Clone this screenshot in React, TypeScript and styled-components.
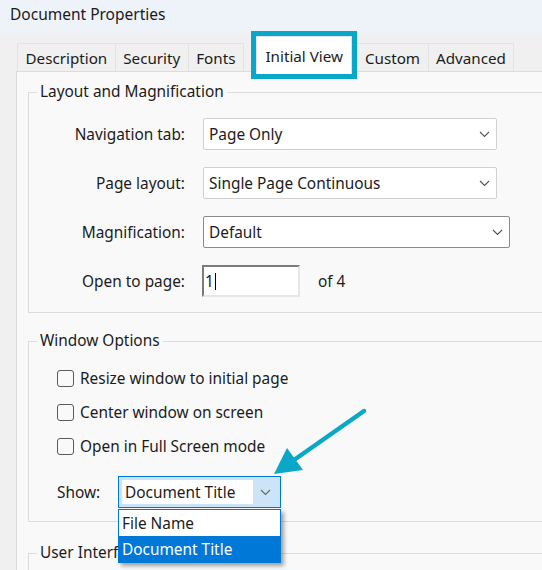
import React from "react";
import styled, { createGlobalStyle } from "styled-components";

const Global = createGlobalStyle`
  html, body { margin: 0; padding: 0; background: #f0f0f0; overflow: hidden; }
  body {
    font-family: "Noto Sans", "Open Sans", sans-serif;
    font-size: 15.4px;
    color: #1b1b1b;
  }
  * { box-sizing: border-box; }
`;

const Window = styled.div`
  position: relative;
  width: 542px;
  height: 570px;
  overflow: hidden;
  background: #f0f0f0;
`;

const TitleBar = styled.div`
  height: 33px;
  background: #eef3fa;
  display: flex;
  align-items: center;
  padding: 0 0 5px 10px;
  font-size: 15.5px;
  color: #1a1a1a;
`;

const Body = styled.div`
  padding: 3px 0 0 16px;
`;

const TabRow = styled.div`
  display: flex;
  align-items: flex-end;
  height: 35px;
  padding-left: 1px;
`;

const Tab = styled.div<{ $active?: boolean }>`
  display: flex;
  align-items: center;
  justify-content: center;
  padding: 0 ${(p) => (p.$active ? "8.5px" : "7.5px")};
  height: ${(p) => (p.$active ? "38px" : "28px")};
  background: ${(p) => (p.$active ? "#ffffff" : "#f0f0f0")};
  border: 1px solid #e3e3e3;
  border-bottom: none;
  margin-right: ${(p) => (p.$active ? "4px" : "-1px")};
  margin-left: ${(p) => (p.$active ? "13px" : "0")};
  margin-bottom: ${(p) => (p.$active ? "-3px" : "0")};
  position: relative;
  z-index: ${(p) => (p.$active ? 2 : 0)};
  outline: ${(p) => (p.$active ? "5px solid #0aa7c9" : "none")};
  white-space: nowrap;
  font-size: 15.2px;
`;

const Panel = styled.div`
  width: 560px;
  height: 520px;
  background: #f9f9f9;
  border: 1px solid #dcdcdc;
  padding: 10px 0 0 11px;
`;

const Group = styled.fieldset<{ $top?: number }>`
  margin: ${(p) => p.$top ?? 0}px 0 0 0;
  padding: 0;
  width: 540px;
  border: 1px solid #dcdcdc;
  min-width: 0;
`;

const Legend = styled.legend`
  margin-left: 8px;
  padding: 0 3px;
  line-height: 20px;
`;

const FormGrid = styled.div`
  display: grid;
  grid-template-columns: 156px auto;
  column-gap: 18px;
  row-gap: 17px;
  padding: 16px 0 15px 0;
  align-items: center;
`;

const Label = styled.div`
  text-align: right;
`;

const Select = styled.div<{ $w: number; $focus?: boolean }>`
  width: ${(p) => p.$w}px;
  height: 32px;
  background: #ffffff;
  border: 1px solid ${(p) => (p.$focus ? "#8a8a8a" : "#d0d0d0")};
  border-radius: 2px;
  display: flex;
  align-items: center;
  justify-content: space-between;
  padding: 0 6px 0 5px;
`;

const InlineRow = styled.div`
  display: flex;
  align-items: center;
  gap: 18px;
  margin-left: -1px;
`;

const TextInput = styled.div`
  width: 98px;
  height: 32px;
  background: #ffffff;
  border-top: 2px solid #7c7c7c;
  border-left: 2px solid #7c7c7c;
  border-right: 2px solid #e6e6e6;
  border-bottom: 2px solid #e6e6e6;
  display: flex;
  align-items: center;
  padding-left: 1px;
`;

const Caret = styled.span`
  width: 1px;
  height: 17px;
  background: #000;
  margin-left: 1px;
`;

const CheckList = styled.div`
  display: flex;
  flex-direction: column;
  gap: 10px;
  padding: 15px 0 0 28px;
`;

const CheckRow = styled.label`
  display: flex;
  align-items: center;
  gap: 6px;
  height: 24px;
`;

const Box = styled.span`
  width: 17px;
  height: 17px;
  border: 1px solid #5a5a5a;
  border-radius: 3px;
  background: #f9f9f9;
`;

const ShowRow = styled.div`
  display: flex;
  align-items: center;
  padding: 18px 0 13px 28px;
`;

const ShowLabel = styled.div`
  width: 61px;
`;

const ShowWrap = styled.div`
  position: relative;
`;

const ShowSelect = styled.div`
  width: 163px;
  height: 32px;
  border: 1px solid #0078d7;
  background: #cce4f7;
  display: flex;
  align-items: center;
  padding: 3px;
`;

const ShowField = styled.div`
  width: 131px;
  height: 100%;
  background: #ffffff;
  display: flex;
  align-items: center;
  padding-left: 3px;
  white-space: nowrap;
`;

const ShowButton = styled.div`
  flex: 1;
  display: flex;
  align-items: center;
  justify-content: center;
`;

const DropList = styled.div`
  position: absolute;
  left: 0;
  top: 33px;
  width: 163px;
  border: 1px solid #0078d7;
  background: #ffffff;
  box-shadow: 3px 3px 4px rgba(0, 0, 0, 0.35);
  z-index: 5;
`;

const DropItem = styled.div<{ $sel?: boolean }>`
  height: 26px;
  display: flex;
  align-items: center;
  padding-left: 3px;
  white-space: nowrap;
  background: ${(p) => (p.$sel ? "#0078d7" : "#ffffff")};
  color: ${(p) => (p.$sel ? "#ffffff" : "#1b1b1b")};
`;

const EmptyContent = styled.div`
  height: 40px;
`;

const ArrowSvg = styled.svg`
  position: absolute;
  left: 0;
  top: 0;
  pointer-events: none;
  z-index: 10;
`;

const Chevron = ({ color = "#555" }: { color?: string }) => (
  <svg width="11" height="7" viewBox="0 0 11 7">
    <path d="M1 1 L5.5 5.5 L10 1" fill="none" stroke={color} strokeWidth="1.1" />
  </svg>
);

export default function App() {
  return (
    <Window>
      <Global />
      <TitleBar>Document Properties</TitleBar>
      <Body>
        <TabRow>
          <Tab>Description</Tab>
          <Tab>Security</Tab>
          <Tab>Fonts</Tab>
          <Tab $active>Initial View</Tab>
          <Tab>Custom</Tab>
          <Tab>Advanced</Tab>
        </TabRow>
        <Panel>
          <Group>
            <Legend>Layout and Magnification</Legend>
            <FormGrid>
              <Label>Navigation tab:</Label>
              <Select $w={294}>
                <span>Page Only</span>
                <Chevron />
              </Select>
              <Label>Page layout:</Label>
              <Select $w={294}>
                <span>Single Page Continuous</span>
                <Chevron />
              </Select>
              <Label>Magnification:</Label>
              <Select $w={307} $focus>
                <span>Default</span>
                <Chevron />
              </Select>
              <Label>Open to page:</Label>
              <InlineRow>
                <TextInput>
                  1<Caret />
                </TextInput>
                <span>of 4</span>
              </InlineRow>
            </FormGrid>
          </Group>
          <Group $top={18}>
            <Legend>Window Options</Legend>
            <CheckList>
              <CheckRow>
                <Box />
                Resize window to initial page
              </CheckRow>
              <CheckRow>
                <Box />
                Center window on screen
              </CheckRow>
              <CheckRow>
                <Box />
                Open in Full Screen mode
              </CheckRow>
            </CheckList>
            <ShowRow>
              <ShowLabel>Show:</ShowLabel>
              <ShowWrap>
                <ShowSelect>
                  <ShowField>Document Title</ShowField>
                  <ShowButton>
                    <Chevron color="#666" />
                  </ShowButton>
                </ShowSelect>
                <DropList>
                  <DropItem>File Name</DropItem>
                  <DropItem $sel>Document Title</DropItem>
                </DropList>
              </ShowWrap>
            </ShowRow>
          </Group>
          <Group $top={21}>
            <Legend>User Interface Options</Legend>
            <EmptyContent />
          </Group>
        </Panel>
      </Body>
      <ArrowSvg width="542" height="570" viewBox="0 0 542 570">
        <line x1="364" y1="411" x2="294" y2="460" stroke="#0aa7c9" strokeWidth="4.5" strokeLinecap="round" />
        <polygon points="274,474 287,448 303,470" fill="#0aa7c9" />
      </ArrowSvg>
    </Window>
  );
}
